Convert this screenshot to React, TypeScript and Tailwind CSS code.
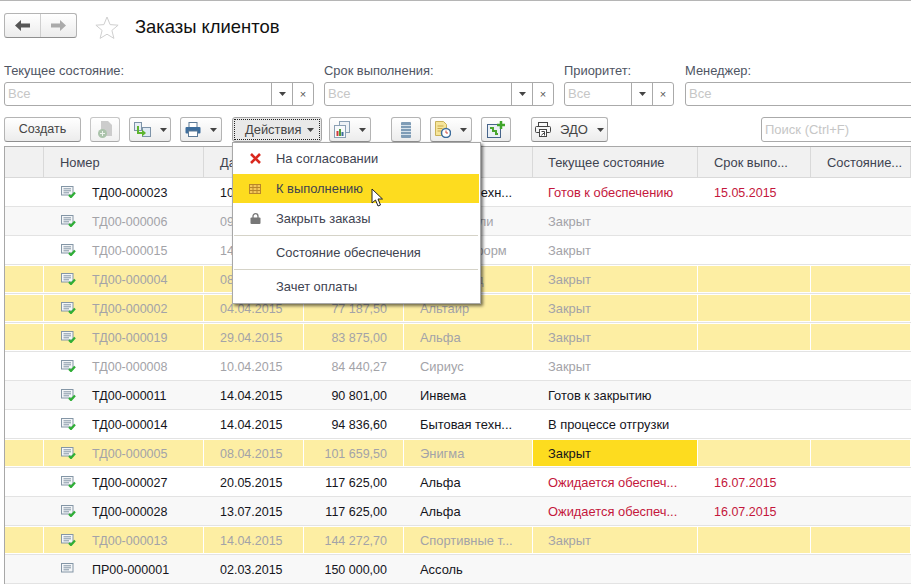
import type { ReactNode } from "react";

type Row = {
  num: string;
  date: string;
  sum: string;
  client: string;
  state: string;
  term?: string;
  tone: "dark" | "gray";
  stateTone?: "red" | "hot";
  yellow?: boolean;
  plain?: boolean;
};

const rows: Row[] = [
  { num: "ТД00-000023", date: "10.04.2015", sum: "70 000,00", client: "Бытовая техн...", state: "Готов к обеспечению", term: "15.05.2015", tone: "dark", stateTone: "red" },
  { num: "ТД00-000006", date: "09.04.2015", sum: "71 250,00", client: "Автомобили", state: "Закрыт", tone: "gray" },
  { num: "ТД00-000015", date: "14.04.2015", sum: "72 400,00", client: "Металлоформ", state: "Закрыт", tone: "gray" },
  { num: "ТД00-000004", date: "08.04.2015", sum: "75 100,00", client: "Ленинград", state: "Закрыт", tone: "gray", yellow: true },
  { num: "ТД00-000002", date: "04.04.2015", sum: "77 187,50", client: "Альтаир", state: "Закрыт", tone: "gray", yellow: true },
  { num: "ТД00-000019", date: "29.04.2015", sum: "83 875,00", client: "Альфа", state: "Закрыт", tone: "gray", yellow: true },
  { num: "ТД00-000008", date: "10.04.2015", sum: "84 440,27", client: "Сириус", state: "Закрыт", tone: "gray" },
  { num: "ТД00-000011", date: "14.04.2015", sum: "90 801,00", client: "Инвема", state: "Готов к закрытию", tone: "dark" },
  { num: "ТД00-000014", date: "14.04.2015", sum: "94 836,60", client: "Бытовая техн...", state: "В процессе отгрузки", tone: "dark" },
  { num: "ТД00-000005", date: "08.04.2015", sum: "101 659,50", client: "Энигма", state: "Закрыт", tone: "gray", stateTone: "hot", yellow: true },
  { num: "ТД00-000027", date: "20.05.2015", sum: "117 625,00", client: "Альфа", state: "Ожидается обеспеч...", term: "16.07.2015", tone: "dark", stateTone: "red" },
  { num: "ТД00-000028", date: "13.07.2015", sum: "117 625,00", client: "Альфа", state: "Ожидается обеспеч...", term: "16.07.2015", tone: "dark", stateTone: "red" },
  { num: "ТД00-000013", date: "14.04.2015", sum: "144 272,70", client: "Спортивные т...", state: "Закрыт", tone: "gray", yellow: true },
  { num: "ПР00-000001", date: "02.03.2015", sum: "150 000,00", client: "Ассоль", state: "", tone: "dark", plain: true },
];

const gridCols = "grid grid-cols-[39px_160px_100px_100px_129px_165px_113px_100px]";

const Caret = () => (
  <svg width="7" height="4" viewBox="0 0 7 4" className="shrink-0">
    <path d="M0 0h7L3.5 4z" fill="#444" />
  </svg>
);

const DocIcon = ({ check }: { check: boolean }) => (
  <svg width="15" height="12" viewBox="0 0 15 12" className="ml-[1px] shrink-0">
    <rect x="0.5" y="0.5" width="11.5" height="8.500" fill="#f4f6f8" stroke="#8496a6" />
    <path d="M2.500 2.800h7.500M2.500 4.800h7.500M2.500 6.800h5.500" stroke="#8496a6" />
    {check && <path d="M8 9l2 2 4-4.500" fill="none" stroke="#2fae35" strokeWidth="2.200" />}
  </svg>
);

const Star = () => (
  <svg width="24" height="23" viewBox="0 0 24 23">
    <path d="M12 1l3.100 7.600 8 .6-6.200 5.200 2 8L12 18.200 5.100 22.400l2-8L.9 9.200l8-.6z" fill="#fff" stroke="#cfcfcf" />
  </svg>
);

const DisabledDoc = () => (
  <svg width="14" height="17" viewBox="0 0 14 17">
    <path d="M3 0h7l4 4v11H3z" fill="#bcbcbc" />
    <circle cx="4.500" cy="12.500" r="4.500" fill="#8fb08f" />
    <path d="M4.500 10v5M2 12.500h5" stroke="#e8f0e8" />
  </svg>
);

const MoveIcon = () => (
  <svg width="17" height="15" viewBox="0 0 17 15">
    <rect x="0.500" y="0.500" width="7" height="8" fill="#e7eef5" stroke="#7d93a8" />
    <rect x="8.500" y="5.500" width="8" height="9" fill="#dfeaf4" stroke="#7d93a8" />
    <path d="M4 4v7h5" fill="none" stroke="#5db52f" strokeWidth="2" />
    <path d="M8 7.500l4 3.500-4 3.500z" fill="#5db52f" />
  </svg>
);

const PrintIcon = () => (
  <svg width="16" height="15" viewBox="0 0 16 15">
    <rect x="4" y="0.500" width="8" height="5" fill="#fff" stroke="#5d7a96" />
    <rect x="0.500" y="5" width="15" height="6.500" rx="1" fill="#3d6d9c" />
    <rect x="3.500" y="9" width="9" height="5.500" fill="#fff" stroke="#5d7a96" />
  </svg>
);

const ChartIcon = () => (
  <svg width="16" height="17" viewBox="0 0 16 17">
    <rect x="5.500" y="0.500" width="10" height="11" fill="#eef2f6" stroke="#8ba0b4" />
    <rect x="0.500" y="4.500" width="11" height="12" fill="#f7f9fb" stroke="#8ba0b4" />
    <rect x="2.500" y="10" width="2" height="5" fill="#d13b3b" />
    <rect x="5" y="8" width="2" height="7" fill="#4f9e3a" />
    <rect x="7.500" y="11" width="2" height="4" fill="#3d6d9c" />
  </svg>
);

const StackIcon = () => (
  <svg width="10" height="16" viewBox="0 0 10 16">
    <rect x="0" y="0" width="10" height="16" rx="1" fill="#7f9cb6" />
    <path d="M0 3.500h10M0 6.500h10M0 9.500h10M0 12.500h10" stroke="#d5e1ea" />
  </svg>
);

const DocClockIcon = () => (
  <svg width="16" height="17" viewBox="0 0 16 17">
    <path d="M0.500 0.500h8l3 3v11h-11z" fill="#f6e59a" stroke="#c9b25a" />
    <path d="M2.500 5h6M2.500 7.500h5M2.500 10h4" stroke="#c9a94a" />
    <circle cx="11" cy="12" r="4.500" fill="#fff" stroke="#3d6d9c" strokeWidth="1.500" />
    <path d="M11 9.500V12h2" fill="none" stroke="#d24a3a" />
  </svg>
);

const TreeAddIcon = () => (
  <svg width="18" height="17" viewBox="0 0 18 17">
    <rect x="0.500" y="3.500" width="13" height="13" fill="#eaf0f6" stroke="#47648a" />
    <path d="M3 7h3v3h3v3h2" fill="none" stroke="#4aa52f" strokeWidth="2" />
    <path d="M14 0v8M10 4h8" stroke="#3fa52a" strokeWidth="2.500" />
  </svg>
);

const EdoIcon = () => (
  <svg width="16" height="15" viewBox="0 0 16 15" fill="none" stroke="#444">
    <rect x="3.500" y="0.500" width="9" height="4" />
    <rect x="0.500" y="4.500" width="15" height="6" rx="1" />
    <rect x="4.500" y="7.500" width="7" height="7" fill="#fff" />
    <path d="M6.500 9.500h3M9.500 9.500v4M6.500 13.500l1.500-2h1.500" />
  </svg>
);

const Btn = ({ children, className }: { children: ReactNode; className: string }) => (
  <div className={`h-[25px] shrink-0 flex items-center justify-center gap-[9px] rounded-[3px] border border-[#b4b4b4] border-b-[#8f8f8f] bg-linear-to-b from-white to-[#ececec] text-[#444] ${className}`}>
    {children}
  </div>
);

const Filter = ({ label, className, controls = true }: { label: string; className: string; controls?: boolean }) => (
  <div className={`shrink-0 ${className}`}>
    <div className="h-[18px] leading-[14px] text-[#4f5563]">{label}</div>
    <div className="h-[24px] flex rounded-[3px] border border-[#aaaaaa] bg-white">
      <div className="flex-1 pl-[3px] text-[13px] leading-[22px] text-[#c6c6c6]">Все</div>
      {controls && (
        <>
          <div className="w-[21px] flex items-center justify-center border-l border-[#aaaaaa]">
            <Caret />
          </div>
          <div className="w-[21px] flex items-center justify-center border-l border-[#aaaaaa] text-[11px] leading-none text-[#555]">×</div>
        </>
      )}
    </div>
  </div>
);

const HeadCell = ({ children, pad = "pl-4" }: { children?: ReactNode; pad?: string }) => (
  <div className={`${pad} border-r border-[#d9d9d9] whitespace-nowrap overflow-hidden leading-[31px]`}>{children}</div>
);

const TableRow = ({ row, index }: { row: Row; index: number }) => {
  const text = row.tone === "gray" ? "text-[#a3a3a8]" : "text-[#15151c]";
  const bg = index % 2 === 1 ? "bg-[#f8f8f8]" : "bg-white";
  const edge = row.yellow ? "border-y border-r border-white leading-[28px]" : "leading-[30px]";
  const fill = row.yellow ? "bg-[#fdeea3]" : "";
  const base = `whitespace-nowrap overflow-hidden ${edge}`;
  const stateCls =
    row.stateTone === "red"
      ? `${fill} text-[#c4173c]`
      : row.stateTone === "hot"
        ? "bg-[#fddc1f] text-[#15151c]"
        : fill;
  return (
    <div className={`${gridCols} h-[29px] border-b border-[#e3e3e3] ${bg} ${text}`}>
      <div className={`${base} ${fill}`} />
      <div className={`${base} ${fill} pl-4 flex items-center`}>
        <DocIcon check={!row.plain} />
        <span className="ml-4 mt-[2px] text-[12.5px]">{row.num}</span>
      </div>
      <div className={`${base} ${fill} pl-4 text-[12.5px]`}>{row.date}</div>
      <div className={`${base} ${fill} text-right text-[12.5px] ${row.yellow ? "pr-4" : "pr-[17px]"}`}>{row.sum}</div>
      <div className={`${base} ${fill} pl-4`}>{row.client}</div>
      <div className={`${base} pl-[15px] ${stateCls}`}>{row.state}</div>
      <div className={`${base} ${fill} pl-4 text-[12.5px] text-[#c4173c]`}>{row.term}</div>
      <div className={`${base} ${fill}`} />
    </div>
  );
};

const MenuItem = ({ icon, label, active }: { icon?: ReactNode; label: string; active?: boolean }) => (
  <div className="h-[30px] flex items-end">
    <div className={`w-full h-[29px] flex items-center ${active ? "bg-[#fddc1f]" : ""}`}>
      <div className="w-[43px] flex justify-center pl-[1px]">{icon}</div>
      <span>{label}</span>
    </div>
  </div>
);

export default function App() {
  return (
    <div className="relative w-[911px] h-[588px] overflow-hidden bg-white border-t border-[#b5b5b5] font-['Liberation_Sans',Arial,sans-serif] text-[12.9px] text-[#15151c]">
      {/* title bar */}
      <div className="h-[48px] pt-3 pl-1 flex items-start">
        <div className="w-[73px] h-[25px] flex rounded-[3px] border border-[#b4b4b4] border-b-[#8f8f8f] bg-linear-to-b from-white to-[#ececec]">
          <div className="w-[36px] flex items-center justify-center border-r border-[#cfcfcf]">
            <svg width="15" height="11" viewBox="0 0 15 11"><path d="M0 5.500L6 0v3.500h9v4H6V11z" fill="#555" /></svg>
          </div>
          <div className="flex-1 flex items-center justify-center">
            <svg width="15" height="11" viewBox="0 0 15 11"><path d="M15 5.500L9 0v3.500H0v4h9V11z" fill="#aaa" /></svg>
          </div>
        </div>
        <div className="ml-[18px] mt-[3px]"><Star /></div>
        <div className="ml-[16px] text-[18.4px] leading-[28px] text-[#111]">Заказы клиентов</div>
      </div>

      {/* filters */}
      <div className="mt-[15px] h-[53px] pl-1 flex gap-[10px]">
        <Filter label="Текущее состояние:" className="w-[310px]" />
        <Filter label="Срок выполнения:" className="w-[230px]" />
        <Filter label="Приоритет:" className="w-[110px]" />
        <Filter label="Менеджер:" className="w-[240px] ml-[1px]" controls={false} />
      </div>

      {/* toolbar */}
      <div className="h-[29px] pl-1 flex">
        <Btn className="w-[77px] text-[12.5px]">Создать</Btn>
        <Btn className="w-[30px] ml-[9px] opacity-75"><DisabledDoc /></Btn>
        <Btn className="w-[42px] ml-[9px]"><MoveIcon /><Caret /></Btn>
        <Btn className="w-[42px] ml-[9px]"><PrintIcon /><Caret /></Btn>
        <div className="w-[90px] h-[25px] ml-[10px] shrink-0 rounded-[3px] border border-[#a5a5a5] bg-[#e9e9e9] p-[1px]">
          <div className="h-full flex items-center pl-[10px] gap-[6px] border border-dotted border-[#222] text-[#444]">
            Действия <Caret />
          </div>
        </div>
        <Btn className="w-[42px] ml-[7px]"><ChartIcon /><Caret /></Btn>
        <Btn className="w-[30px] ml-[20px]"><StackIcon /></Btn>
        <Btn className="w-[42px] ml-[9px]"><DocClockIcon /><Caret /></Btn>
        <Btn className="w-[30px] ml-[9px]"><TreeAddIcon /></Btn>
        <Btn className="w-[77px] ml-[20px] text-[13px]"><EdoIcon /><span>ЭДО</span><Caret /></Btn>
        <div className="w-[160px] h-[25px] ml-[153px] shrink-0 rounded-[3px] border border-[#aaaaaa] pl-[3px] text-[13px] leading-[23px] text-[#c6c6c6]">Поиск (Ctrl+F)</div>
      </div>

      {/* table */}
      <div className="ml-1 border-l border-t border-[#a8a8a8]">
        <div className={`${gridCols} h-[31px] bg-[#f1f1f1] border-b border-[#d9d9d9] text-[#3e4350]`}>
          <HeadCell />
          <HeadCell>Номер</HeadCell>
          <HeadCell>Дата</HeadCell>
          <HeadCell />
          <HeadCell />
          <HeadCell pad="pl-[15px]">Текущее состояние</HeadCell>
          <HeadCell>Срок выпо...</HeadCell>
          <HeadCell>Состояние...</HeadCell>
        </div>
        {rows.map((row, i) => (
          <TableRow key={row.num} row={row} index={i} />
        ))}
      </div>

      {/* dropdown menu */}
      <div className="absolute left-[232px] top-[141px] w-[249px] h-[162px] bg-white border border-[#a8a8a8] pr-[1px] text-[#3e4350] shadow-[2px_2px_3px_rgba(0,0,0,0.55)]">
        <MenuItem
          label="На согласовании"
          icon={<svg width="11" height="11" viewBox="0 0 11 11"><path d="M1 1l9 9M10 1l-9 9" stroke="#d9281e" strokeWidth="2.600" /></svg>}
        />
        <MenuItem
          active
          label="К выполнению"
          icon={
            <svg width="12" height="10" viewBox="0 0 12 10" fill="none" stroke="#b8862a">
              <rect x="0.500" y="0.500" width="11" height="9" fill="#f4c85a" />
              <path d="M0 3.500h12M0 6.500h12M4 0v10M8 0v10" />
            </svg>
          }
        />
        <MenuItem
          label="Закрыть заказы"
          icon={
            <svg width="11" height="11" viewBox="0 0 11 11">
              <path d="M3 5V3.200a2.500 2.500 0 015 0V5" fill="none" stroke="#777" strokeWidth="1.300" />
              <rect x="0.500" y="4.500" width="10" height="6.500" rx="1" fill="#777" />
            </svg>
          }
        />
        <div className="mx-[1px] mt-[2px] mb-[1px] border-t border-[#d5d3c8]" />
        <MenuItem label="Состояние обеспечения" />
        <div className="mx-[1px] mt-[2px] mb-[1px] border-t border-[#d5d3c8]" />
        <MenuItem label="Зачет оплаты" />
      </div>

      {/* mouse pointer */}
      <svg className="absolute left-[371px] top-[187px]" width="13" height="20" viewBox="0 0 13 20">
        <path d="M1 1v14l3.500-3 2.500 6 2.500-1-2.500-6H11.500z" fill="#fff" stroke="#222" />
      </svg>
    </div>
  );
}
